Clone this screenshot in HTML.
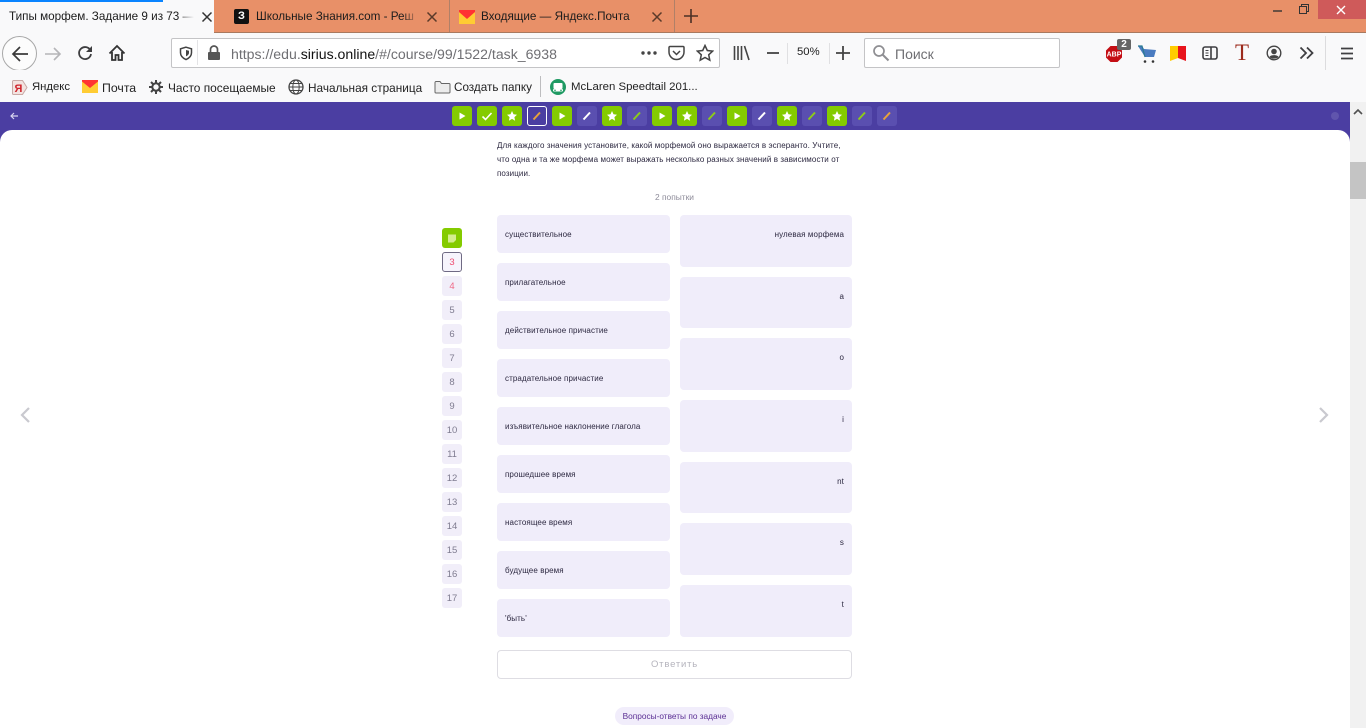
<!DOCTYPE html>
<html lang="ru"><head><meta charset="utf-8"><title>Типы морфем</title>
<style>
*{box-sizing:border-box}
html,body{margin:0;padding:0;width:1366px;height:728px;overflow:hidden;background:#fff;font-family:"Liberation Sans","Noto Sans CJK SC",sans-serif}
.a{position:absolute;white-space:nowrap}
#tabs{left:0;top:0;width:1366px;height:33px;background:#e89068;border-bottom:1px solid #a8795f}
#nav{left:0;top:33px;width:1366px;height:37px;background:#f9f9fa}
#bm{left:0;top:70px;width:1366px;height:32px;background:#f9f9fa}
.t{font-size:11.7px;color:#1c1c1c}
.bm{font-size:11.8px;color:#222;top:81px}
.sep{width:1px;background:#b08068;top:0;height:32px}
#purple{left:0;top:102px;width:1350px;height:60px;background:#4b3ea2}
#card{left:0;top:130px;width:1350px;height:598px;background:#fff;border-radius:12px 12px 0 0}
.p{top:106px;width:20px;height:20px;border-radius:3px;background:#5a4fb0}
.g{background:#84cb00;width:20px}
.p svg{position:absolute;left:0;top:0}
.l{left:497px;width:173px;height:38px;background:#f0edfa;border-radius:4px;font-size:8px;letter-spacing:.1px;color:#2c2840;padding:15px 0 0 8px;line-height:9px}
.r{left:680px;width:172px;background:#f0edfa;border-radius:4px;font-size:8px;letter-spacing:.1px;color:#2c2840;padding:15px 8px 0 0;text-align:right;line-height:9px}
.n{left:442px;width:20px;height:20px;background:#f1eef9;border-radius:3px;font-size:9.5px;color:#7f7c90;text-align:center;line-height:22px}
.d{font-size:8px;color:#2c2840;letter-spacing:.1px;left:497px}
</style></head><body>

<div class="a" id="tabs"></div>
<div class="a" style="left:0;top:0;width:214px;height:33px;background:#f9f9fa"></div>
<div class="a" style="left:0;top:0;width:163px;height:2px;background:#0a84ff"></div>
<div class="a t" style="left:9px;top:10px;width:185px;overflow:hidden;-webkit-mask-image:linear-gradient(90deg,#000 92%,transparent)">Типы морфем. Задание 9 из 73 —</div>
<svg class="a" style="left:201px;top:11px" width="12" height="12"><path d="M1.5 1.5l9 9M10.5 1.5l-9 9" stroke="#333" stroke-width="1.5"/></svg>

<div class="a" style="left:234px;top:9px;width:15px;height:15px;background:#111;border-radius:2px;color:#fff;font-size:11px;font-weight:bold;text-align:center;line-height:15px">З</div>
<div class="a t" style="left:256px;top:10px;width:163px;overflow:hidden;-webkit-mask-image:linear-gradient(90deg,#000 90%,transparent)">Школьные Знания.com - Реш</div>
<svg class="a" style="left:426px;top:11px" width="12" height="12"><path d="M1.5 1.5l9 9M10.5 1.5l-9 9" stroke="#5a3a2a" stroke-width="1.5"/></svg>
<div class="a sep" style="left:449px"></div>

<svg class="a" style="left:459px;top:10px" width="16" height="14"><rect width="16" height="14" fill="#fc3"/><path d="M0 0h16v2L8 9 0 2z" fill="#f33"/></svg>
<div class="a t" style="left:481px;top:10px">Входящие — Яндекс.Почта</div>
<svg class="a" style="left:651px;top:11px" width="12" height="12"><path d="M1.5 1.5l9 9M10.5 1.5l-9 9" stroke="#5a3a2a" stroke-width="1.5"/></svg>
<div class="a sep" style="left:674px"></div>
<svg class="a" style="left:683px;top:8px" width="16" height="16"><path d="M8 1v14M1 8h14" stroke="#4a3026" stroke-width="1.6"/></svg>

<svg class="a" style="left:1272px;top:5px" width="12" height="12"><path d="M1 6h9" stroke="#333" stroke-width="1.4"/></svg>
<svg class="a" style="left:1298px;top:3px" width="12" height="12"><path d="M1.5 3.5h7v7h-7zM3.5 3.5v-2h7v7h-2" fill="none" stroke="#333"/></svg>
<div class="a" style="left:1318px;top:0;width:48px;height:19px;background:#cf5a5a"></div>
<svg class="a" style="left:1336px;top:5px" width="10" height="10"><path d="M1 1l8 8M9 1l-8 8" stroke="#fff" stroke-width="1.4"/></svg>

<div class="a" id="nav"></div>
<div class="a" style="left:2px;top:36px;width:35px;height:35px;border:1px solid #a8a8a8;border-radius:50%;background:#fcfcfc"></div>
<svg class="a" style="left:10px;top:44px" width="20" height="20"><path d="M18 10H3M10 3l-7 7 7 7" fill="none" stroke="#3a3a3a" stroke-width="1.7"/></svg>
<svg class="a" style="left:44px;top:45px" width="18" height="18"><path d="M1 9h15M10 3l6 6-6 6" fill="none" stroke="#b5b5b8" stroke-width="1.6"/></svg>
<svg class="a" style="left:76px;top:44px" width="18" height="18"><path d="M14.5 6.5A6 6 0 1 0 15 10" fill="none" stroke="#3d3d3f" stroke-width="1.8"/><path d="M16 2v6h-6z" fill="#3d3d3f"/></svg>
<svg class="a" style="left:108px;top:44px" width="18" height="18"><path d="M1.5 9.5L9 2l7.5 7.5M4 8v8h3.5v-5h3v5H14V8" fill="none" stroke="#333" stroke-width="1.8"/></svg>

<div class="a" style="left:171px;top:38px;width:549px;height:30px;background:#fff;border:1px solid #c4c4c6;border-radius:2px"></div>
<svg class="a" style="left:179px;top:46px" width="14" height="15"><path d="M7 1.2l5.5 1.6v4c0 3.400-2.500 5.500-5.500 6.800C4 12.300 1.500 10.200 1.500 6.800v-4z" fill="none" stroke="#444" stroke-width="1.500"/><path d="M7 4l3 .8v2c0 1.700-1.300 2.800-3 3.600z" fill="#444"/></svg>
<div class="a" style="left:197px;top:40px;width:1px;height:25px;background:#e4e4e6"></div>
<svg class="a" style="left:207px;top:45px" width="14" height="16"><path d="M3.500 7V4.500a3.500 3.500 0 0 1 7 0V7" fill="none" stroke="#555" stroke-width="1.700"/><rect x="1" y="7" width="12" height="8" rx="1" fill="#555"/></svg>
<div class="a" style="left:231px;top:46px;font-size:14.1px;color:#6f6f73">https://edu.<span style="color:#111">sirius.online</span>/#/course/99/1522/task_6938</div>
<svg class="a" style="left:640px;top:50px" width="18" height="6"><circle cx="3" cy="3" r="1.700" fill="#444"/><circle cx="9" cy="3" r="1.700" fill="#444"/><circle cx="15" cy="3" r="1.700" fill="#444"/></svg>
<svg class="a" style="left:668px;top:45px" width="17" height="16"><path d="M2 1.500h13a1 1 0 0 1 1 1V7a7.500 7.500 0 0 1-15 0V2.500a1 1 0 0 1 1-1z" fill="none" stroke="#444" stroke-width="1.500"/><path d="M5 6l3.500 3.500L12 6" fill="none" stroke="#444" stroke-width="1.500"/></svg>
<svg class="a" style="left:696px;top:44px" width="18" height="18"><path d="M9 1.500l2.300 5 5.400.6-4 3.700 1.100 5.400L9 13.500l-4.800 2.700 1.100-5.400-4-3.700 5.400-.6z" fill="none" stroke="#444" stroke-width="1.500"/></svg>

<svg class="a" style="left:733px;top:45px" width="18" height="16"><path d="M1.500 1v14M5 1v14M8.500 1v14M11.500 1l4.500 14" stroke="#444" stroke-width="1.600" fill="none"/></svg>
<svg class="a" style="left:766px;top:49px" width="14" height="8"><path d="M1 4h12" stroke="#444" stroke-width="1.800"/></svg>
<div class="a" style="left:787px;top:43px;width:1px;height:21px;background:#e0e0e2"></div>
<div class="a" style="left:797px;top:46px;font-size:11.3px;color:#222">50%</div>
<div class="a" style="left:829px;top:43px;width:1px;height:21px;background:#e0e0e2"></div>
<svg class="a" style="left:835px;top:45px" width="16" height="16"><path d="M8 1v14M1 8h14" stroke="#444" stroke-width="1.800"/></svg>

<div class="a" style="left:864px;top:38px;width:196px;height:30px;background:#fff;border:1px solid #c4c4c6;border-radius:2px"></div>
<svg class="a" style="left:872px;top:44px" width="18" height="18"><circle cx="7" cy="7" r="5" fill="none" stroke="#8f8f93" stroke-width="1.700"/><path d="M10.500 10.500l6 6" stroke="#8f8f93" stroke-width="2"/></svg>
<div class="a" style="left:895px;top:46px;font-size:14px;color:#6f6f73">Поиск</div>

<svg class="a" style="left:1105px;top:45px" width="18" height="18"><path d="M5.500 1h7L17 5.500v7L12.500 17h-7L1 12.500v-7z" fill="#c40e14"/><text x="9" y="11.500" font-size="7" font-weight="bold" fill="#fff" text-anchor="middle" font-family="Liberation Sans">ABP</text></svg>
<div class="a" style="left:1117px;top:39px;width:14px;height:11px;background:#666;border-radius:2px;color:#fff;font-size:10px;font-weight:bold;line-height:11px;text-align:center">2</div>
<svg class="a" style="left:1137px;top:44px" width="20" height="20"><path d="M1 2h4l2 3 12 1-2 7H8z" fill="#4a7bc0"/><path d="M1 2h4l3 11" fill="none" stroke="#2a7a90" stroke-width="1.200"/><circle cx="8" cy="17.500" r="1.300" fill="#333"/><circle cx="16" cy="17.500" r="1.300" fill="#333"/></svg>
<svg class="a" style="left:1170px;top:45px" width="16" height="17"><path d="M0 1h8v12l-8 3z" fill="#fc0"/><path d="M8 1h8v15l-8-3z" fill="#e8141c"/></svg>
<svg class="a" style="left:1202px;top:46px" width="16" height="14"><rect x="1" y="1" width="14" height="12" rx="2" fill="none" stroke="#3f3f42" stroke-width="1.600"/><path d="M9 1v12" stroke="#3f3f42" stroke-width="1.600"/><path d="M3.500 4.500h3M3.500 7h3M3.500 9.500h3" stroke="#3f3f42"/></svg>
<div class="a" style="left:1233px;top:41px;width:18px;text-align:center;font-family:'Liberation Serif',serif;font-size:23px;color:#9c2a1c;line-height:24px">T</div>
<svg class="a" style="left:1266px;top:45px" width="16" height="16"><circle cx="8" cy="8" r="6.800" fill="none" stroke="#444" stroke-width="1.400"/><circle cx="8" cy="6.500" r="2.800" fill="#444"/><path d="M3.500 12c1-2.500 8-2.500 9 0-2 2.200-7 2.200-9 0z" fill="#444"/></svg>
<svg class="a" style="left:1299px;top:46px" width="15" height="14"><path d="M1.500 1.500L7 7l-5.500 5.500M8 1.500L13.500 7 8 12.500" fill="none" stroke="#3f3f42" stroke-width="1.800"/></svg>
<div class="a" style="left:1325px;top:36px;width:1px;height:34px;background:#dcdcde"></div>
<svg class="a" style="left:1340px;top:47px" width="14" height="13"><path d="M1 1.500h12M1 6.500h12M1 11.500h12" stroke="#3f3f42" stroke-width="1.700"/></svg>

<div class="a" id="bm"></div>
<svg class="a" style="left:12px;top:80px" width="16" height="15"><path d="M1.500 .5h9l4.500 7-4.500 7h-9a1 1 0 0 1-1-1v-12a1 1 0 0 1 1-1z" fill="#f3e3e0" stroke="#c9a9a5"/><text x="6.500" y="12" font-size="11" font-weight="bold" fill="#d0242c" text-anchor="middle" font-family="Liberation Sans">Я</text></svg>
<div class="a bm" style="left:32px;font-size:11.3px">Яндекс</div>
<svg class="a" style="left:82px;top:80px" width="16" height="13"><rect width="16" height="13" fill="#fc3"/><path d="M0 0h16v1.500L8 8 0 1.500z" fill="#f33"/></svg>
<div class="a bm" style="left:102px;font-size:12.3px">Почта</div>
<svg class="a" style="left:149px;top:80px" width="14" height="14"><circle cx="7" cy="7" r="3.700" fill="none" stroke="#444" stroke-width="2"/><path d="M7 0v3M7 11v3M0 7h3M11 7h3M2 2l2 2M10 10l2 2M12 2l-2 2M4 10l-2 2" stroke="#444" stroke-width="2"/></svg>
<div class="a bm" style="left:168px;font-size:11.9px">Часто посещаемые</div>
<svg class="a" style="left:288px;top:79px" width="16" height="16"><circle cx="8" cy="8" r="7" fill="none" stroke="#444" stroke-width="1.300"/><ellipse cx="8" cy="8" rx="3.200" ry="7" fill="none" stroke="#444"/><path d="M1 8h14M2 4.500h12M2 11.500h12" stroke="#444"/></svg>
<div class="a bm" style="left:308px;font-size:11.8px">Начальная страница</div>
<svg class="a" style="left:434px;top:80px" width="17" height="14"><path d="M1 2.500a1 1 0 0 1 1-1h4l1.500 2H15a1 1 0 0 1 1 1V12a1 1 0 0 1-1 1H2a1 1 0 0 1-1-1z" fill="#ececec" stroke="#666"/></svg>
<div class="a bm" style="left:454px;font-size:11.7px">Создать папку</div>
<div class="a" style="left:540px;top:76px;width:1px;height:21px;background:#bdbdbf"></div>
<svg class="a" style="left:550px;top:79px" width="16" height="16"><circle cx="8" cy="8" r="8" fill="#1f9a63"/><rect x="3.500" y="4" width="9" height="6" rx="1" fill="#fff"/><rect x="3" y="10" width="10" height="2.500" rx="1" fill="#fff"/><circle cx="5" cy="11.300" r=".8" fill="#1f9a63"/><circle cx="11" cy="11.300" r=".8" fill="#1f9a63"/></svg>
<div class="a bm" style="left:571px;font-size:11.4px">McLaren Speedtail 201...</div>

<div class="a" id="purple"></div>
<div class="a" id="card"></div>
<svg class="a" style="left:9px;top:111px" width="10" height="10"><path d="M9 5H2M5 2L2 5l3 3" fill="none" stroke="#d8d4f0" stroke-width="1.200"/></svg>
<div class="a" style="left:1331px;top:112px;width:8px;height:8px;background:#6055ad;border-radius:50%"></div>

<div class="a p g" style="left:452px"><svg width="20" height="20"><path d="M7.500 6.500l6 3.500-6 3.500z" fill="#fff"/></svg></div>
<div class="a p g" style="left:477px"><svg width="20" height="20"><path d="M5.500 10.500l3 3 6-6.500" fill="none" stroke="#fff" stroke-width="1.600"/></svg></div>
<div class="a p g" style="left:502px"><svg width="20" height="20"><path d="M10 5l1.500 3.300 3.500.4-2.600 2.400.7 3.600L10 12.900l-3.100 1.800.7-3.600L5 8.700l3.500-.4z" fill="#fff"/></svg></div>
<div class="a p" style="left:527px;background:#4b3ea2;border:1px solid #fff"><svg width="18" height="18"><path d="M5.500 12.500l6.500-7" stroke="#e8a23a" stroke-width="2"/></svg></div>
<div class="a p g" style="left:552px"><svg width="20" height="20"><path d="M7.500 6.500l6 3.500-6 3.500z" fill="#fff"/></svg></div>
<div class="a p" style="left:577px"><svg width="20" height="20"><path d="M6.500 13.500l6.500-7" stroke="#fff" stroke-width="2"/></svg></div>
<div class="a p g" style="left:602px"><svg width="20" height="20"><path d="M10 5l1.500 3.300 3.500.4-2.600 2.400.7 3.600L10 12.900l-3.100 1.800.7-3.600L5 8.700l3.500-.4z" fill="#fff"/></svg></div>
<div class="a p" style="left:627px"><svg width="20" height="20"><path d="M6.500 13.500l6.500-7" stroke="#8ccb1a" stroke-width="2"/></svg></div>
<div class="a p g" style="left:652px"><svg width="20" height="20"><path d="M7.500 6.500l6 3.500-6 3.500z" fill="#fff"/></svg></div>
<div class="a p g" style="left:677px"><svg width="20" height="20"><path d="M10 5l1.500 3.300 3.500.4-2.600 2.400.7 3.600L10 12.900l-3.100 1.800.7-3.600L5 8.700l3.500-.4z" fill="#fff"/></svg></div>
<div class="a p" style="left:702px"><svg width="20" height="20"><path d="M6.500 13.500l6.500-7" stroke="#8ccb1a" stroke-width="2"/></svg></div>
<div class="a p g" style="left:727px"><svg width="20" height="20"><path d="M7.500 6.500l6 3.500-6 3.500z" fill="#fff"/></svg></div>
<div class="a p" style="left:752px"><svg width="20" height="20"><path d="M6.500 13.500l6.500-7" stroke="#fff" stroke-width="2"/></svg></div>
<div class="a p g" style="left:777px"><svg width="20" height="20"><path d="M10 5l1.500 3.300 3.500.4-2.600 2.400.7 3.600L10 12.900l-3.100 1.800.7-3.600L5 8.700l3.500-.4z" fill="#fff"/></svg></div>
<div class="a p" style="left:802px"><svg width="20" height="20"><path d="M6.500 13.500l6.500-7" stroke="#8ccb1a" stroke-width="2"/></svg></div>
<div class="a p g" style="left:827px"><svg width="20" height="20"><path d="M10 5l1.500 3.300 3.500.4-2.600 2.400.7 3.600L10 12.900l-3.100 1.800.7-3.600L5 8.700l3.500-.4z" fill="#fff"/></svg></div>
<div class="a p" style="left:852px"><svg width="20" height="20"><path d="M6.500 13.500l6.500-7" stroke="#8ccb1a" stroke-width="2"/></svg></div>
<div class="a p" style="left:877px"><svg width="20" height="20"><path d="M6.500 13.500l6.500-7" stroke="#e8a23a" stroke-width="2"/></svg></div>

<div class="a d" style="top:141px">Для каждого значения установите, какой морфемой оно выражается в эсперанто. Учтите,</div>
<div class="a d" style="top:155px">что одна и та же морфема может выражать несколько разных значений в зависимости от</div>
<div class="a d" style="top:169px">позиции.</div>
<div class="a" style="left:497px;width:355px;top:192px;font-size:8.4px;color:#8e8c9a;text-align:center">2 попытки</div>

<div class="a" style="left:442px;top:228px;width:20px;height:20px;background:#84cb00;border-radius:3px"><svg width="20" height="20" style="position:absolute;left:0;top:0"><path d="M6 6.500h8v5.500l-2.500 2.500H6z" fill="#d4ed8f"/></svg></div>
<div class="a n" style="top:252px;border:1px solid #6f6a84;background:#f6f4fc;color:#ef4e72;line-height:20px">3</div>
<div class="a n" style="top:276px;color:#ef6a88">4</div>
<div class="a n" style="top:300px">5</div>
<div class="a n" style="top:324px">6</div>
<div class="a n" style="top:348px">7</div>
<div class="a n" style="top:372px">8</div>
<div class="a n" style="top:396px">9</div>
<div class="a n" style="top:420px">10</div>
<div class="a n" style="top:444px">11</div>
<div class="a n" style="top:468px">12</div>
<div class="a n" style="top:492px">13</div>
<div class="a n" style="top:516px">14</div>
<div class="a n" style="top:540px">15</div>
<div class="a n" style="top:564px">16</div>
<div class="a n" style="top:588px">17</div>

<div class="a l" style="top:215px">существительное</div>
<div class="a l" style="top:263px">прилагательное</div>
<div class="a l" style="top:311px">действительное причастие</div>
<div class="a l" style="top:359px">страдательное причастие</div>
<div class="a l" style="top:407px">изъявительное наклонение глагола</div>
<div class="a l" style="top:455px">прошедшее время</div>
<div class="a l" style="top:503px">настоящее время</div>
<div class="a l" style="top:551px">будущее время</div>
<div class="a l" style="top:599px">'быть'</div>

<div class="a r" style="top:215px;height:52px">нулевая морфема</div>
<div class="a r" style="top:277px;height:51px">a</div>
<div class="a r" style="top:338px;height:52px">o</div>
<div class="a r" style="top:400px;height:52px">i</div>
<div class="a r" style="top:462px;height:51px">nt</div>
<div class="a r" style="top:523px;height:52px">s</div>
<div class="a r" style="top:585px;height:52px">t</div>

<div class="a" style="left:497px;top:650px;width:355px;height:29px;border:1px solid #dedde3;border-radius:4px;background:#fff;text-align:center;font-size:9.500px;letter-spacing:.8px;color:#b5b4bd;line-height:27px">Ответить</div>
<div class="a" style="left:615px;top:707px;width:119px;height:18px;background:#f1edfb;border-radius:9px;text-align:center;font-size:8.3px;color:#5b2f94;line-height:18px">Вопросы-ответы по задаче</div>

<svg class="a" style="left:18px;top:406px" width="14" height="18"><path d="M11 2L4 9l7 7" fill="none" stroke="#c9c9cf" stroke-width="2.200"/></svg>
<svg class="a" style="left:1317px;top:406px" width="14" height="18"><path d="M3 2l7 7-7 7" fill="none" stroke="#c9c9cf" stroke-width="2.200"/></svg>

<div class="a" style="left:1350px;top:102px;width:16px;height:626px;background:#f1f1f1"></div>
<div class="a" style="left:1350px;top:162px;width:16px;height:37px;background:#c4c4c4"></div>
<svg class="a" style="left:1353px;top:108px" width="10" height="8"><path d="M1 6l4-4 4 4" fill="none" stroke="#505050" stroke-width="1.600"/></svg>
</body></html>
